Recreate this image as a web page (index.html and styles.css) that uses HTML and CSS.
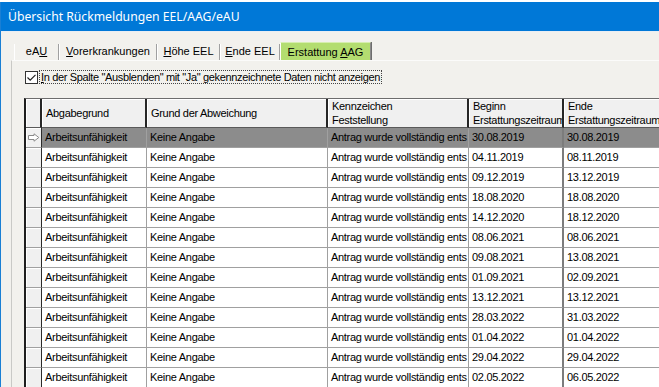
FILE: index.html
```html
<!DOCTYPE html>
<html lang="de">
<head>
    <meta charset="UTF-8" />
    <title>Übersicht Rückmeldungen EEL/AAG/eAU</title>
    <link rel="stylesheet" href="styles.css">
</head>
<body>
    <div class="window">
        <div class="titlebar">Übersicht Rückmeldungen EEL/AAG/eAU</div>

        <div class="client">
            <div class="tabs">
                <div class="tab tab-eau">eA<u>U</u></div>
                <div class="tab tab-vor"><u>V</u>orerkrankungen</div>
                <div class="tab tab-hoehe"><u>H</u>öhe EEL</div>
                <div class="tab tab-ende"><u>E</u>nde EEL</div>
                <div class="tab tab-aag active">Erstattung <u>A</u>AG</div>
            </div>

            <div class="panel">
                <label class="check">
                    <span class="box">
                        <svg width="11" height="11" viewBox="0 0 11 11"><path d="M1.5 5.5 L4.2 8.2 L9.5 2.8" fill="none" stroke="#222" stroke-width="1.2"/></svg>
                    </span>
                    <span class="check-text"><u>I</u>n der Spalte "Ausblenden" mit "Ja" gekennzeichnete Daten nicht anzeigen</span>
                </label>

                <div class="grid">
                    <div class="row head">
                        <div class="ind"></div>
                        <div class="cell">Abgabegrund</div>
                        <div class="cell">Grund der Abweichung</div>
                        <div class="cell">Kennzeichen<br>Feststellung</div>
                        <div class="cell">Beginn<br>Erstattungszeitraum</div>
                        <div class="cell">Ende<br>Erstattungszeitraum</div>
                    </div>

                    <div class="row sel">
                        <div class="ind">
                            <svg width="12" height="9" viewBox="0 0 12 9"><path d="M0.5 2.5 H6 V0.8 L10.8 4.5 L6 8.2 V6.5 H0.5 Z" fill="#fff" stroke="#8a8a8a"/></svg>
                        </div>
                        <div class="cell">Arbeitsunfähigkeit</div>
                        <div class="cell">Keine Angabe</div>
                        <div class="cell">Antrag wurde vollständig ents</div>
                        <div class="cell date">30.08.2019</div>
                        <div class="cell date">30.08.2019</div>
                    </div>
                    <div class="row">
                        <div class="ind"></div>
                        <div class="cell">Arbeitsunfähigkeit</div>
                        <div class="cell">Keine Angabe</div>
                        <div class="cell">Antrag wurde vollständig ents</div>
                        <div class="cell date">04.11.2019</div>
                        <div class="cell date">08.11.2019</div>
                    </div>
                    <div class="row">
                        <div class="ind"></div>
                        <div class="cell">Arbeitsunfähigkeit</div>
                        <div class="cell">Keine Angabe</div>
                        <div class="cell">Antrag wurde vollständig ents</div>
                        <div class="cell date">09.12.2019</div>
                        <div class="cell date">13.12.2019</div>
                    </div>
                    <div class="row">
                        <div class="ind"></div>
                        <div class="cell">Arbeitsunfähigkeit</div>
                        <div class="cell">Keine Angabe</div>
                        <div class="cell">Antrag wurde vollständig ents</div>
                        <div class="cell date">18.08.2020</div>
                        <div class="cell date">18.08.2020</div>
                    </div>
                    <div class="row">
                        <div class="ind"></div>
                        <div class="cell">Arbeitsunfähigkeit</div>
                        <div class="cell">Keine Angabe</div>
                        <div class="cell">Antrag wurde vollständig ents</div>
                        <div class="cell date">14.12.2020</div>
                        <div class="cell date">18.12.2020</div>
                    </div>
                    <div class="row">
                        <div class="ind"></div>
                        <div class="cell">Arbeitsunfähigkeit</div>
                        <div class="cell">Keine Angabe</div>
                        <div class="cell">Antrag wurde vollständig ents</div>
                        <div class="cell date">08.06.2021</div>
                        <div class="cell date">08.06.2021</div>
                    </div>
                    <div class="row">
                        <div class="ind"></div>
                        <div class="cell">Arbeitsunfähigkeit</div>
                        <div class="cell">Keine Angabe</div>
                        <div class="cell">Antrag wurde vollständig ents</div>
                        <div class="cell date">09.08.2021</div>
                        <div class="cell date">13.08.2021</div>
                    </div>
                    <div class="row">
                        <div class="ind"></div>
                        <div class="cell">Arbeitsunfähigkeit</div>
                        <div class="cell">Keine Angabe</div>
                        <div class="cell">Antrag wurde vollständig ents</div>
                        <div class="cell date">01.09.2021</div>
                        <div class="cell date">02.09.2021</div>
                    </div>
                    <div class="row">
                        <div class="ind"></div>
                        <div class="cell">Arbeitsunfähigkeit</div>
                        <div class="cell">Keine Angabe</div>
                        <div class="cell">Antrag wurde vollständig ents</div>
                        <div class="cell date">13.12.2021</div>
                        <div class="cell date">13.12.2021</div>
                    </div>
                    <div class="row">
                        <div class="ind"></div>
                        <div class="cell">Arbeitsunfähigkeit</div>
                        <div class="cell">Keine Angabe</div>
                        <div class="cell">Antrag wurde vollständig ents</div>
                        <div class="cell date">28.03.2022</div>
                        <div class="cell date">31.03.2022</div>
                    </div>
                    <div class="row">
                        <div class="ind"></div>
                        <div class="cell">Arbeitsunfähigkeit</div>
                        <div class="cell">Keine Angabe</div>
                        <div class="cell">Antrag wurde vollständig ents</div>
                        <div class="cell date">01.04.2022</div>
                        <div class="cell date">01.04.2022</div>
                    </div>
                    <div class="row">
                        <div class="ind"></div>
                        <div class="cell">Arbeitsunfähigkeit</div>
                        <div class="cell">Keine Angabe</div>
                        <div class="cell">Antrag wurde vollständig ents</div>
                        <div class="cell date">29.04.2022</div>
                        <div class="cell date">29.04.2022</div>
                    </div>
                    <div class="row">
                        <div class="ind"></div>
                        <div class="cell">Arbeitsunfähigkeit</div>
                        <div class="cell">Keine Angabe</div>
                        <div class="cell">Antrag wurde vollständig ents</div>
                        <div class="cell date">02.05.2022</div>
                        <div class="cell date">06.05.2022</div>
                    </div>
                </div>
            </div>
        </div>
    </div>
</body>
</html>
```

FILE: styles.css
```css
body {
    margin: 0;
    padding-top: 2px;
    background-color: #ffffff;
    font-family: "Liberation Sans", Arial, sans-serif;
    font-size: 11px;
    color: #000;
    overflow: hidden;
}

.window {
    height: 385px;
    border-left: 1px solid #1a7fd4;
    background-color: #f2f1ed;
    overflow: hidden;
}

.titlebar {
    height: 29px;
    line-height: 29px;
    padding-left: 7px;
    background-color: #0078d7;
    color: #fff;
    font-family: "Noto Sans", sans-serif;
    font-size: 12.2px;
    border-bottom: 1px solid #e9eef4;
}

.client {
    padding: 10px 0 0 10px;
}

/* tab strip */

.tabs {
    display: flex;
    align-items: flex-end;
    height: 18px;
    margin-left: 3px;
}

.tab {
    box-sizing: border-box;
    height: 16px;
    line-height: 15px;
    text-align: center;
    border-left: 1px solid #fff;
    border-right: 1px solid #a0a0a0;
    box-shadow: 1px 0 0 #6d6d6d;
}

.tab-eau { width: 45px; }
.tab-vor { width: 98px; }
.tab-hoehe { width: 63px; }
.tab-ende { width: 60px; }
.tab-aag { width: 91px; }

.tab.active {
    height: 18px;
    line-height: 18px;
    background-color: #b3dd70;
    border-top: 1px solid #d6eeb0;
    border-right: 1px solid #8a8a8a;
}

/* page */

.panel {
    height: 400px;
    padding: 9px 0 0 12px;
    border-top: 1px solid #fbfbfa;
    border-left: 1px solid #c9c9c6;
}

.check {
    display: flex;
    align-items: center;
    height: 14px;
    margin-left: 1px;
}

.box {
    box-sizing: border-box;
    width: 13px;
    height: 13px;
    border: 1px solid #333;
    background-color: #fff;
    display: flex;
}

.check-text {
    margin-left: 1px;
    padding: 0 1px;
    line-height: 12px;
    border: 1px dotted #444;
    letter-spacing: -0.35px;
}

/* grid */

.grid {
    margin-top: 14px;
    width: max-content;
    border-top: 1px solid #6d6d6d;
    border-left: 2px solid #1e1e1e;
}

.row {
    display: grid;
    grid-template-columns: 16px 105px 181px 141px 95px 110px;
    height: 20px;
}

.row.head {
    height: 29px;
}

.ind {
    box-sizing: border-box;
    background-color: #f0f0f0;
    border-right: 1px solid #2b2b2b;
    border-bottom: 1px solid #a0a0a0;
    box-shadow: inset 1px 1px 0 #fff;
    display: flex;
    align-items: center;
    justify-content: center;
}

.cell {
    box-sizing: border-box;
    padding-left: 3px;
    line-height: 19px;
    white-space: nowrap;
    overflow: hidden;
    background-color: #fff;
    border-right: 1px solid #a0a0a0;
    border-bottom: 1px solid #a0a0a0;
    letter-spacing: -0.3px;
}

.cell.date {
    border-right: 2px solid #7c7c7c;
}

.head .ind,
.head .cell {
    background-color: #f0f0f0;
    border-right: 2px solid #262626;
    border-bottom: 1px solid #5a5a5a;
    box-shadow: inset 1px 1px 0 #fff;
}

.head .cell {
    display: flex;
    flex-direction: column;
    justify-content: center;
    line-height: 14px;
    padding-left: 4px;
}

.sel .cell {
    background-color: #8c8c8c;
}
```
